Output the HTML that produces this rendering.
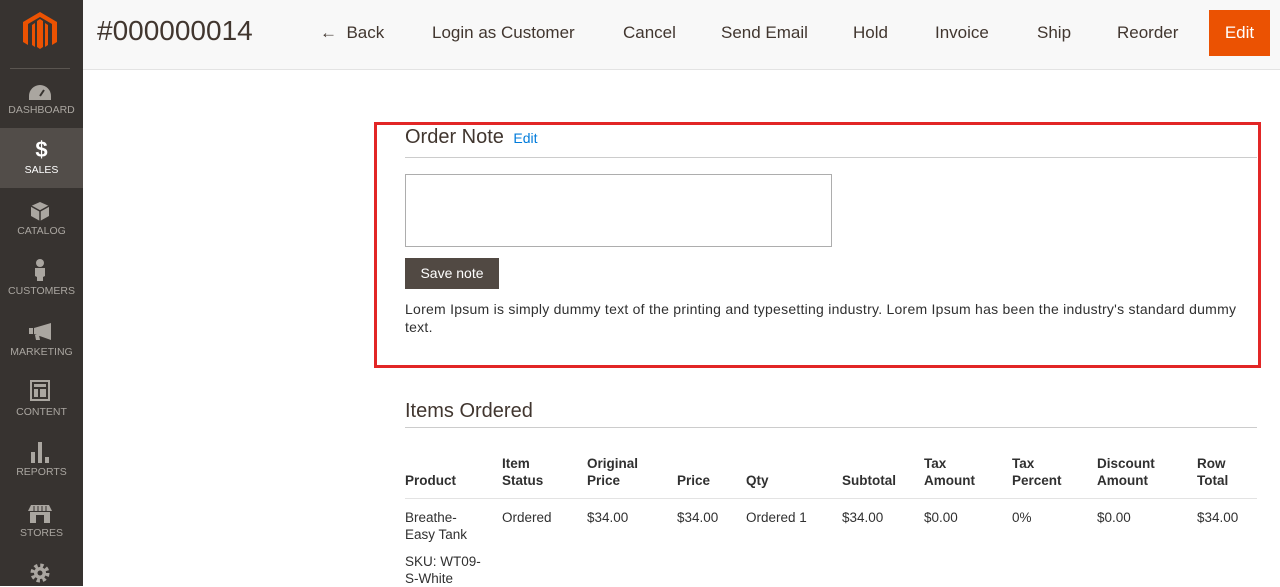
<!DOCTYPE html>
<html><head><meta charset="utf-8"><style>
*{margin:0;padding:0;box-sizing:border-box}
body{width:1280px;height:586px;overflow:hidden;background:#fff;font-family:"Liberation Sans",sans-serif;color:#303030;position:relative}
.a{position:absolute;white-space:nowrap}
#sb{position:absolute;left:0;top:0;width:83px;height:586px;background:#373330}
.lab{position:absolute;left:0;width:83px;text-align:center;font-size:10.5px;color:#aaa6a0}
.ic{position:absolute;left:0;width:83px;text-align:center;color:#aaa6a0}
#hd{position:absolute;left:83px;top:0;right:0;height:70px;background:#f8f8f8;border-bottom:1px solid #e3e3e3}
.hb{position:absolute;top:23px;font-size:17px;color:#41362f}
.th{position:absolute;font-size:13.5px;font-weight:bold;color:#303030;line-height:17px}
.td{position:absolute;font-size:13.5px;color:#303030;line-height:17px}
</style></head><body>
<div id="sb">
 <svg class="a" style="left:23px;top:12px" width="34" height="38" viewBox="0 0 34 38"><path d="M17 0L34 10v20l-5 3V12L17 5 5 12v21l-5-3V10z" fill="#eb5202"/><path d="M14 9l3-2 3 2v26l-3 2-3-2z" fill="#eb5202"/><path d="M9 13l3-2v24l-3-2zM25 13l-3-2v24l3-2z" fill="#eb5202"/></svg>
 <div class="a" style="left:10px;top:68px;width:60px;height:1px;background:#5a5550"></div>
 <svg class="a" style="left:29px;top:85px" width="22" height="15" viewBox="0 0 22 15"><path d="M11 0A11 11 0 0 0 0 11v4h22v-4A11 11 0 0 0 11 0z" fill="#aaa6a0"/><path d="M11 11l4-6" stroke="#373330" stroke-width="2"/></svg>
 <div class="lab" style="top:104px">DASHBOARD</div>
 <div class="a" style="left:0;top:128px;width:83px;height:60px;background:#524d49"></div>
 <div class="ic" style="top:137px;font-size:22px;font-weight:bold;color:#fff">$</div>
 <div class="lab" style="top:164px;color:#fff">SALES</div>
 <svg class="a" style="left:31px;top:202px" width="18" height="19" viewBox="0 0 18 19"><path d="M9 0l9 4v10l-9 5-9-5V4z" fill="#aaa6a0"/><path d="M0 4l9 5 9-5M9 9v10" stroke="#373330" stroke-width="1.5" fill="none"/></svg>
 <div class="lab" style="top:225px">CATALOG</div>
 <svg class="a" style="left:34px;top:259px" width="12" height="22" viewBox="0 0 12 22"><circle cx="6" cy="4" r="4" fill="#aaa6a0"/><path d="M1 9h10v8l-2 1v4H3v-4l-2-1z" fill="#aaa6a0"/></svg>
 <div class="lab" style="top:285px">CUSTOMERS</div>
 <svg class="a" style="left:29px;top:323px" width="22" height="17" viewBox="0 0 22 17"><path d="M0 5h4v6H0zM5 5l17-5v17L5 11zM6 12h4l1 5H7z" fill="#aaa6a0"/></svg>
 <div class="lab" style="top:346px">MARKETING</div>
 <svg class="a" style="left:30px;top:380px" width="20" height="21" viewBox="0 0 20 21"><rect x="1" y="1" width="18" height="19" fill="none" stroke="#aaa6a0" stroke-width="2"/><rect x="4" y="4" width="12" height="3" fill="#aaa6a0"/><rect x="4" y="9" width="4" height="8" fill="#aaa6a0"/><rect x="10" y="9" width="6" height="8" fill="#aaa6a0"/></svg>
 <div class="lab" style="top:406px">CONTENT</div>
 <svg class="a" style="left:31px;top:442px" width="18" height="21" viewBox="0 0 18 21"><rect x="0" y="10" width="4" height="11" fill="#aaa6a0"/><rect x="7" y="0" width="4" height="21" fill="#aaa6a0"/><rect x="14" y="15" width="4" height="6" fill="#aaa6a0"/></svg>
 <div class="lab" style="top:466px">REPORTS</div>
 <svg class="a" style="left:28px;top:505px" width="24" height="18" viewBox="0 0 24 18"><path d="M3 0h18l3 6H0z" fill="#aaa6a0"/><path d="M2 7h20v11H2z" fill="#aaa6a0"/><path d="M6 1v5M10 1v5M14 1v5M18 1v5" stroke="#373330"/><rect x="8" y="10" width="8" height="8" fill="#373330"/></svg>
 <div class="lab" style="top:527px">STORES</div>
 <svg class="a" style="left:29px;top:562px" width="22" height="22" viewBox="0 0 22 22"><circle cx="11" cy="11" r="7" fill="none" stroke="#aaa6a0" stroke-width="5" stroke-dasharray="3 2.5"/><circle cx="11" cy="11" r="6" fill="#aaa6a0"/><circle cx="11" cy="11" r="2.5" fill="#373330"/></svg>
</div>
<div id="hd">
 <div class="a" style="left:14px;top:15px;font-size:28px;color:#41362f">#000000014</div>
 <div class="hb" style="left:237px">&#8592;&nbsp; Back</div>
 <div class="hb" style="left:349px">Login as Customer</div>
 <div class="hb" style="left:540px">Cancel</div>
 <div class="hb" style="left:638px">Send Email</div>
 <div class="hb" style="left:770px">Hold</div>
 <div class="hb" style="left:852px">Invoice</div>
 <div class="hb" style="left:954px">Ship</div>
 <div class="hb" style="left:1034px">Reorder</div>
 <div class="a" style="left:1126px;top:10px;width:61px;height:46px;background:#eb5202;color:#fff;font-size:17px;text-align:center;line-height:46px">Edit</div>
</div>
<div class="a" style="left:374px;top:122px;width:887px;height:246px;border:3px solid #e22626"></div>
<div class="a" style="left:405px;top:126px;font-size:20px;color:#41362f">Order Note <span style="font-size:14px;color:#007bdb">&nbsp;Edit</span></div>
<div class="a" style="left:405px;top:157px;width:852px;height:1px;background:#ccc"></div>
<div class="a" style="left:405px;top:174px;width:427px;height:73px;border:1px solid #adadad"></div>
<div class="a" style="left:405px;top:258px;width:94px;height:31px;background:#514943;color:#fff;font-size:14px;text-align:center;line-height:31px">Save note</div>
<div class="a" style="left:405px;top:300px;font-size:14px;letter-spacing:0.25px;line-height:18px;width:845px;white-space:normal;color:#303030">Lorem Ipsum is simply dummy text of the printing and typesetting industry. Lorem Ipsum has been the industry's standard dummy text.</div>
<div class="a" style="left:405px;top:400px;font-size:20px;color:#41362f">Items Ordered</div>
<div class="a" style="left:405px;top:427px;width:852px;height:1px;background:#ccc"></div>
<div class="th" style="left:405px;top:472px">Product</div>
<div class="th" style="left:502px;top:455px">Item<br>Status</div>
<div class="th" style="left:587px;top:455px">Original<br>Price</div>
<div class="th" style="left:677px;top:472px">Price</div>
<div class="th" style="left:746px;top:472px">Qty</div>
<div class="th" style="left:842px;top:472px">Subtotal</div>
<div class="th" style="left:924px;top:455px">Tax<br>Amount</div>
<div class="th" style="left:1012px;top:455px">Tax<br>Percent</div>
<div class="th" style="left:1097px;top:455px">Discount<br>Amount</div>
<div class="th" style="left:1197px;top:455px">Row<br>Total</div>
<div class="a" style="left:405px;top:498px;width:852px;height:1px;background:#e3e3e3"></div>
<div class="td" style="left:405px;top:509px">Breathe-<br>Easy Tank</div>
<div class="td" style="left:405px;top:553px">SKU: WT09-<br>S-White</div>
<div class="td" style="left:502px;top:509px">Ordered</div>
<div class="td" style="left:587px;top:509px">$34.00</div>
<div class="td" style="left:677px;top:509px">$34.00</div>
<div class="td" style="left:746px;top:509px">Ordered 1</div>
<div class="td" style="left:842px;top:509px">$34.00</div>
<div class="td" style="left:924px;top:509px">$0.00</div>
<div class="td" style="left:1012px;top:509px">0%</div>
<div class="td" style="left:1097px;top:509px">$0.00</div>
<div class="td" style="left:1197px;top:509px">$34.00</div>
</body></html>
